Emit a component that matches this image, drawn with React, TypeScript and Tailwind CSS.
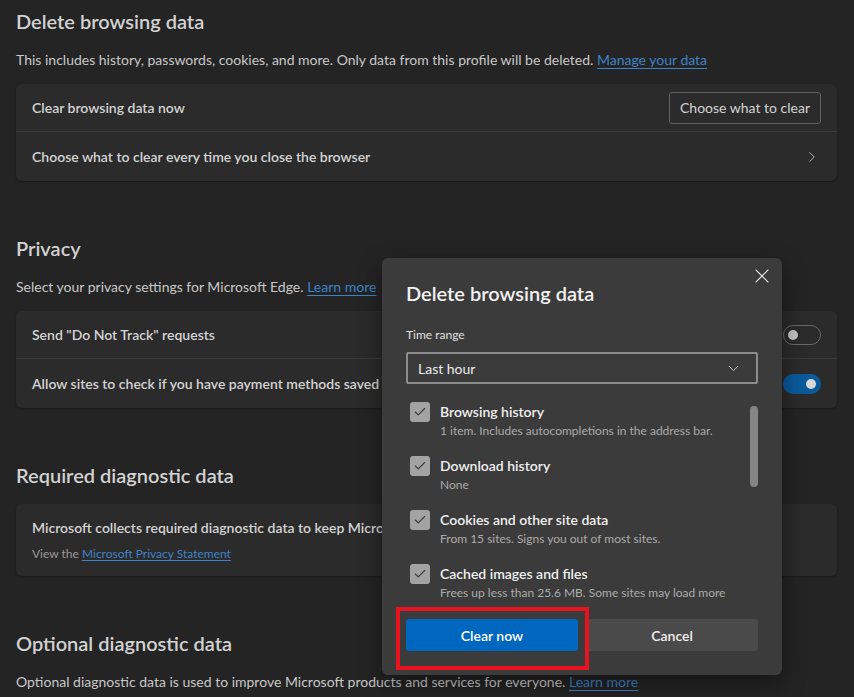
import { Check, ChevronDown, ChevronRight, X } from 'lucide-react'

const items = [
  { label: 'Browsing history', desc: '1 item. Includes autocompletions in the address bar.' },
  { label: 'Download history', desc: 'None' },
  { label: 'Cookies and other site data', desc: 'From 15 sites. Signs you out of most sites.' },
  { label: 'Cached images and files', desc: 'Frees up less than 25.6 MB. Some sites may load more' },
]

function Heading({ children }: { children: React.ReactNode }) {
  return <h2 className="text-[20px] leading-[28px] font-semibold text-[#d2d2d2]">{children}</h2>
}

function Toggle({ on }: { on: boolean }) {
  return on ? (
    <div className="w-[38px] h-[20px] rounded-full bg-[#0a5a9c] flex items-center justify-end pr-[5px]">
      <div className="w-[10px] h-[10px] rounded-full bg-[#d8d8d8]" />
    </div>
  ) : (
    <div className="w-[38px] h-[20px] rounded-full border border-[#6a6a6a] flex items-center pl-[4px]">
      <div className="w-[10px] h-[10px] rounded-full bg-[#c4c4c4]" />
    </div>
  )
}

export default function App() {
  return (
    <div
      className="relative w-[854px] h-[697px] overflow-hidden bg-[#242424] text-[#cfcfcf]"
      style={{ fontFamily: '"Segoe UI", Lato, "Noto Sans", sans-serif' }}
    >
      <div className="pl-4 pr-[17px] pt-[7px] flex flex-col">
        {/* Delete browsing data */}
        <Heading>Delete browsing data</Heading>
        <p className="mt-[15px] text-[14px] leading-5 text-[#c8c8c8]">
          This includes history, passwords, cookies, and more. Only data from this profile will be deleted.{' '}
          <a className="text-[#3f82c8] underline underline-offset-[3px] decoration-[#3f82c8]">Manage your data</a>
        </p>
        <div className="mt-[14px] rounded-md bg-[#2b2b2b] shadow-[0_1px_2px_rgba(0,0,0,0.3)]">
          <div className="h-[48px] px-4 flex items-center justify-between border-b border-[#3a3a3a]">
            <span className="text-[14px] font-semibold text-[#d4d4d4]">Clear browsing data now</span>
            <button className="h-[32px] px-[10px] rounded-[3px] border border-[#616161] text-[14px] text-[#d4d4d4]">
              Choose what to clear
            </button>
          </div>
          <div className="h-[49px] px-4 flex items-center justify-between">
            <span className="text-[14px] font-semibold text-[#d4d4d4]">
              Choose what to clear every time you close the browser
            </span>
            <ChevronRight size={18} strokeWidth={1.25} className="text-[#b8b8b8]" />
          </div>
        </div>

        {/* Privacy */}
        <div className="mt-[53px]">
          <Heading>Privacy</Heading>
        </div>
        <p className="mt-[15px] text-[14px] leading-5 text-[#c8c8c8]">
          Select your privacy settings for Microsoft Edge.{' '}
          <a className="text-[#3f82c8] underline underline-offset-[3px] decoration-[#3f82c8]">Learn more</a>
        </p>
        <div className="mt-[14px] rounded-md bg-[#2b2b2b] shadow-[0_1px_2px_rgba(0,0,0,0.3)]">
          <div className="h-[48px] px-4 flex items-center justify-between border-b border-[#3a3a3a]">
            <span className="text-[14px] font-semibold text-[#d4d4d4]">Send "Do Not Track" requests</span>
            <Toggle on={false} />
          </div>
          <div className="h-[49px] px-4 flex items-center justify-between">
            <span className="text-[14px] font-semibold text-[#d4d4d4] whitespace-nowrap">
              Allow sites to check if you have payment methods saved
            </span>
            <Toggle on />
          </div>
        </div>

        {/* Required diagnostic data */}
        <div className="mt-[53px]">
          <Heading>Required diagnostic data</Heading>
        </div>
        <div className="mt-[15px] h-[72px] rounded-md bg-[#2b2b2b] px-4 pt-[14px] shadow-[0_1px_2px_rgba(0,0,0,0.3)] overflow-hidden">
          <div className="text-[14px] leading-5 font-semibold text-[#d4d4d4] whitespace-nowrap">
            Microsoft collects required diagnostic data to keep Microsoft Edge secure, up to date and performing as expected
          </div>
          <div className="mt-[8px] text-[12px] leading-4 text-[#9a9a9a]">
            View the{' '}
            <a className="text-[#3f82c8] underline underline-offset-2 decoration-[#3f82c8]">Microsoft Privacy Statement</a>
          </div>
        </div>

        {/* Optional diagnostic data */}
        <div className="mt-[53px]">
          <Heading>Optional diagnostic data</Heading>
        </div>
        <p className="mt-[15px] text-[14px] leading-5 text-[#c8c8c8]">
          Optional diagnostic data is used to improve Microsoft products and services for everyone.{' '}
          <a className="text-[#3f82c8] underline underline-offset-[3px] decoration-[#3f82c8]">Learn more</a>
        </p>
      </div>

      {/* Dialog */}
      <div className="absolute left-[382px] top-[258px] w-[400px] h-[417px] rounded-[6px] bg-[#3b3b3b] shadow-[0_8px_24px_rgba(0,0,0,0.45)] px-6 pt-[21px] flex flex-col">
        <button className="absolute right-[8px] top-[6px] w-[24px] h-[24px] flex items-center justify-center text-[#e6e6e6]">
          <X size={24} strokeWidth={1.1} />
        </button>
        <h3 className="text-[20px] leading-[28px] font-semibold text-[#f2f2f2]">Delete browsing data</h3>
        <div className="mt-[20px] text-[12px] leading-4 text-[#e0e0e0]">Time range</div>
        <div className="mt-[9px] h-[32px] border-2 border-[#8c8c8c] rounded-[2px] flex items-center justify-between pl-[10px] pr-[14px]">
          <span className="text-[14px] text-[#ececec]">Last hour</span>
          <ChevronDown size={17} strokeWidth={1.25} className="text-[#d8d8d8]" />
        </div>
        <div className="relative mt-[18px] h-[199px] overflow-hidden">
          <div className="flex flex-col pl-1">
            {items.map((it) => (
              <div key={it.label} className="h-[54px] flex gap-[10px]">
                <div className="w-[20px] h-[20px] rounded-[3px] bg-[#a3a3a3] flex items-center justify-center">
                  <Check size={14} strokeWidth={2} className="text-[#3b3b3b]" />
                </div>
                <div className="flex flex-col">
                  <span className="text-[14px] leading-5 font-semibold text-[#f0f0f0]">{it.label}</span>
                  <span className="mt-px text-[12px] leading-4 text-[#ababab] whitespace-nowrap">{it.desc}</span>
                </div>
              </div>
            ))}
          </div>
          <div className="absolute right-0 top-[4px] w-[8px] h-[81px] rounded-full bg-[#858585]" />
        </div>
        <div className="mt-[18px] flex gap-2">
          <button className="flex-1 h-[32px] rounded-[3px] bg-[#0067c0] text-[14px] font-semibold text-white">
            Clear now
          </button>
          <button className="flex-1 h-[32px] rounded-[3px] bg-[#4a4a4a] text-[14px] font-semibold text-[#f0f0f0]">
            Cancel
          </button>
        </div>
        {/* highlight */}
        <div className="absolute left-[14px] top-[349px] w-[193px] h-[63px] border-[4px] border-[#e8131f]" />
      </div>
    </div>
  )
}
